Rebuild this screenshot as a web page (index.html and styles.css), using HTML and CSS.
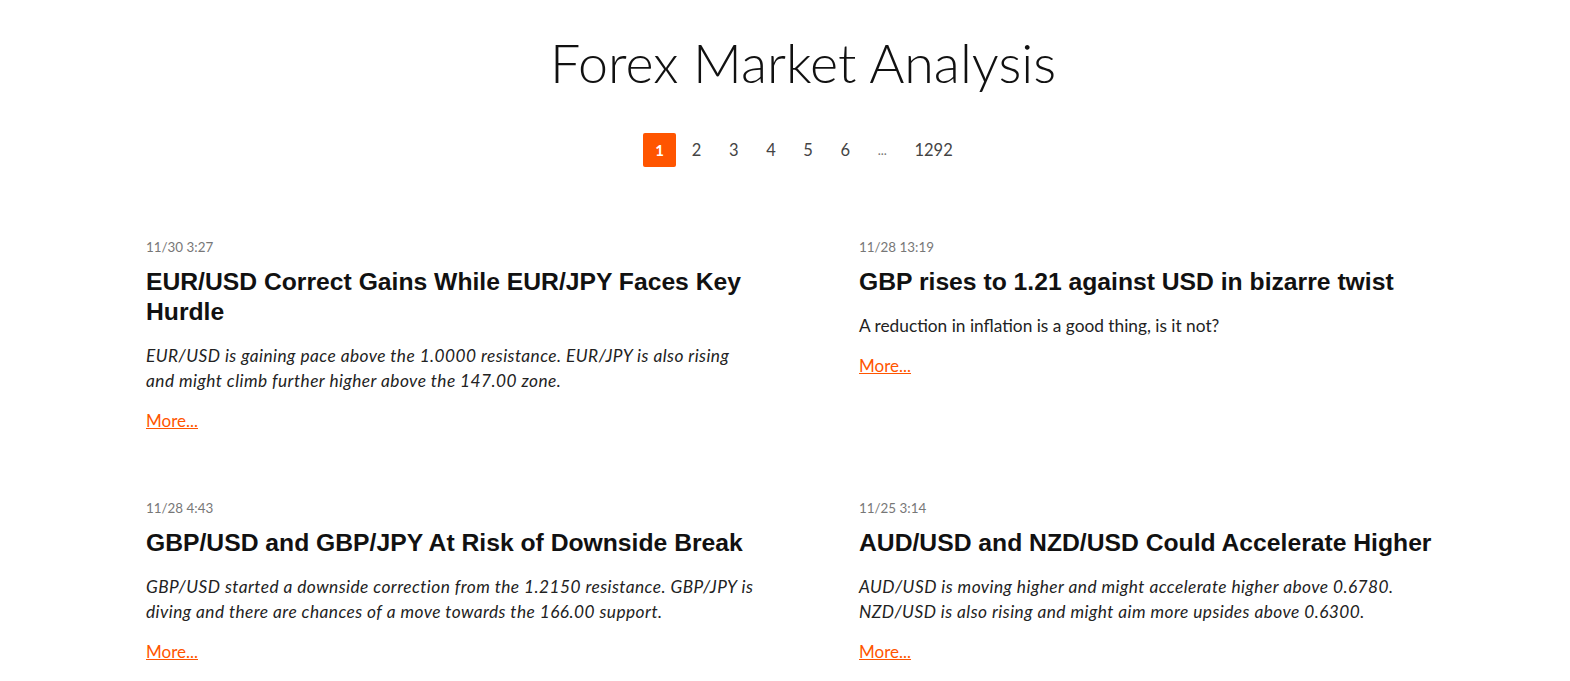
FILE: index.html
```
<!DOCTYPE html>
<html lang="en">
<head>
    <meta charset="UTF-8">
    <meta name="viewport" content="width=device-width, initial-scale=1.0">
    <title>Forex Market Analysis</title>
    <link rel="stylesheet" href="styles.css">
</head>
<body>
    <div class="page">
        <h1>Forex Market Analysis</h1>

        <div class="pager">
            <a class="active" href="#">1</a>
            <a href="#">2</a>
            <a href="#">3</a>
            <a href="#">4</a>
            <a href="#">5</a>
            <a href="#">6</a>
            <span class="dots">...</span>
            <a href="#">1292</a>
        </div>

        <div class="news">
            <div class="item">
                <div class="date">11/30 3:27</div>
                <h2>EUR/USD Correct Gains While EUR/JPY Faces Key Hurdle</h2>
                <p class="lead">EUR/USD is gaining pace above the 1.0000 resistance. EUR/JPY is also rising and might climb further higher above the 147.00 zone.</p>
                <a class="more" href="#">More...</a>
            </div>
            <div class="item">
                <div class="date">11/28 13:19</div>
                <h2>GBP rises to 1.21 against USD in bizarre twist</h2>
                <p>A reduction in inflation is a good thing, is it not?</p>
                <a class="more" href="#">More...</a>
            </div>
            <div class="item">
                <div class="date">11/28 4:43</div>
                <h2>GBP/USD and GBP/JPY At Risk of Downside Break</h2>
                <p class="lead">GBP/USD started a downside correction from the 1.2150 resistance. GBP/JPY is diving and there are chances of a move towards the 166.00 support.</p>
                <a class="more" href="#">More...</a>
            </div>
            <div class="item">
                <div class="date">11/25 3:14</div>
                <h2>AUD/USD and NZD/USD Could Accelerate Higher</h2>
                <p class="lead">AUD/USD is moving higher and might accelerate higher above 0.6780. NZD/USD is also rising and might aim more upsides above 0.6300.</p>
                <a class="more" href="#">More...</a>
            </div>
        </div>
    </div>
</body>
</html>
```

FILE: styles.css
```
* {
    font-family: Lato, "Open Sans", sans-serif;
    box-sizing: border-box;
}
body {
    margin: 0;
    background: #fff;
    color: #222;
}
.page {
    width: 1314px;
    margin-left: 146px;
    padding-top: 30px;
}
h1 {
    margin: 0;
    font-size: 53.8px;
    font-weight: 300;
    line-height: 64px;
    text-align: center;
    color: #111;
}
.pager {
    display: flex;
    justify-content: center;
    align-items: center;
    gap: 3.6px;
    margin-top: 39px;
    padding-left: 2px;
}
.pager a,
.pager span {
    display: flex;
    align-items: center;
    justify-content: center;
    min-width: 33px;
    height: 34px;
    padding: 0 12px;
    font-size: 16.5px;
    color: #444;
    text-decoration: none;
}
.pager .active {
    background-color: #ff5500;
    color: #fff;
    font-weight: bold;
    font-size: 15px;
    border-radius: 2px;
}
.pager .dots {
    color: #777;
    font-size: 13px;
}
.news {
    display: grid;
    grid-template-columns: 608px 608px;
    column-gap: 105px;
    row-gap: 66px;
    margin-top: 71px;
}
.date {
    font-size: 13.4px;
    line-height: 18px;
    color: #777;
    margin-bottom: 11px;
}
h2 {
    margin: 0 0 16px;
    font-family: "Liberation Sans", Arial, sans-serif;
    font-size: 24.7px;
    line-height: 30px;
    font-weight: bold;
    color: #111;
}
p {
    margin: 0 0 15px;
    font-size: 17.3px;
    line-height: 25px;
    color: #222;
}
p.lead {
    font-style: italic;
    letter-spacing: 0.45px;
}
.more {
    font-size: 17px;
    line-height: 25px;
    color: #ff5500;
    text-decoration: underline;
}
```
